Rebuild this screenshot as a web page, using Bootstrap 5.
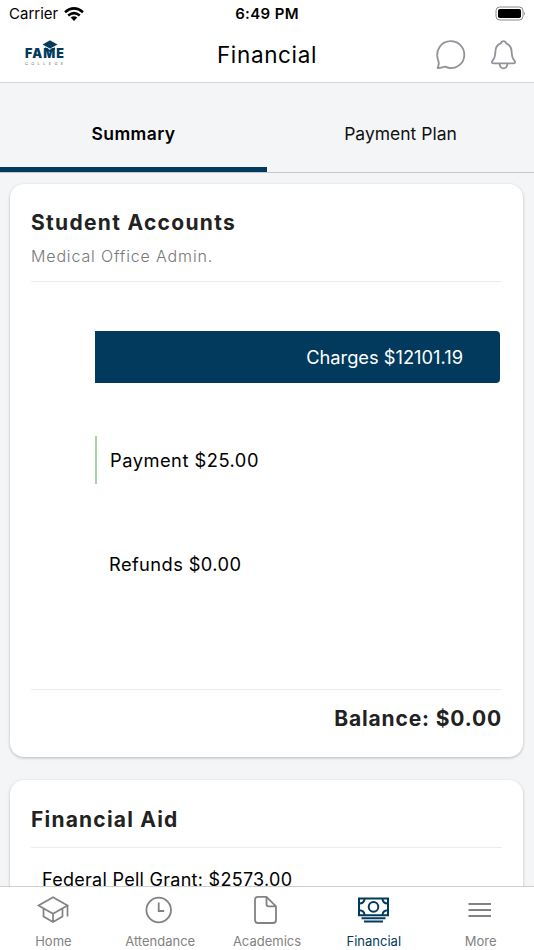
<!DOCTYPE html>
<html lang="en">
<head>
<meta charset="utf-8">
<meta name="viewport" content="width=device-width, initial-scale=1">
<title>Financial</title>
<link href="https://cdn.jsdelivr.net/npm/bootstrap@5.3.0/dist/css/bootstrap.min.css" rel="stylesheet">
<style>
:root{--navy:#023a5d;--page:#f4f5f7;--muted:#828282}
body{font-family:Inter,"Liberation Sans",sans-serif;background:var(--page);color:#000;line-height:1.2}
.status-bar{height:28px;font-size:15px;padding:0 9px}
.status-bar > div{flex:1 1 0}
.status-bar .wifi{margin-left:5px}
.clock-text{font-weight:600;letter-spacing:.35px}
.top-bar{height:55px;border-bottom:1px solid #d5d6d9;padding:0 17px 1px}
.top-bar > div{flex:1 1 0}
.page-title{font-size:22.5px;font-weight:400;letter-spacing:.65px}
.brand{width:42px;color:var(--navy);margin-left:8px;padding-top:4px}
.brand-name{font-size:12.5px;font-weight:900;letter-spacing:1.1px;line-height:12px}
.brand-sub{font-size:4px;letter-spacing:3.3px;color:#666;line-height:5px;margin-top:1px}
.brand-cap{top:-4px;left:16px}
.tab-strip{height:90px;border-bottom:1px solid #c6c7ca}
.tab-strip .nav-link{font-size:17.5px;color:#111;border-radius:0;padding:16px 0 0;border-bottom:5px solid transparent}
.tab-strip .nav-link.active{background:none;color:#000;font-weight:600;letter-spacing:.4px;border-bottom-color:var(--navy)}
main{padding:11px 11px 0 10px}
.panel{border:0;border-radius:14px;box-shadow:0 1px 3px rgba(0,0,0,.25);padding:0 21px}
.panel-accounts{height:573px}
.panel-title{font-size:21px;font-weight:700;color:#222;letter-spacing:1.3px;line-height:26px}
.accounts-title{padding-top:26px}
.panel-sub{font-size:16px;font-weight:300;color:#777;letter-spacing:.85px;line-height:20px;padding-top:10px;margin-bottom:15px}
.rule{height:1px;background:#ececee}
.chart{padding:49px 2px 0 64px}
.chart-row{height:103px}
.bar{height:52px}
.bar-charge{background:var(--navy);border-radius:0 4px 4px 0;color:#fff;padding-right:37px}
.bar-pay{height:48px;border-left:2px solid #a3d5a8;padding-left:13px;margin-top:2px}
.bar-refund{height:50px;padding-left:14px}
.bar-label{font-size:18.3px;letter-spacing:0;padding-top:1px}
.bar-pay .bar-label{letter-spacing:.5px}
.bar-refund .bar-label{letter-spacing:.4px}
.balance{padding:16px 0 25px;letter-spacing:.85px}
.panel-aid{margin-top:23px;height:300px}
.aid-title{padding:27px 0 14px;letter-spacing:1.2px}
.aid-line{font-size:18px;letter-spacing:.28px;padding:21px 0 0 11px}
.bottom-bar{height:64px;border-top:1px solid #cfcfd1;color:var(--muted)}
.bottom-bar a{color:inherit;font-size:13px;padding-top:7px;width:20%}
.bottom-bar a svg{height:32px;width:34px;margin-bottom:8px}
.bottom-bar a.current{color:var(--navy)}
</style>
<script src="https://cdn.jsdelivr.net/npm/bootstrap@5.3.0/dist/js/bootstrap.bundle.min.js"></script>
</head>
<body class="vh-100 d-flex flex-column overflow-hidden">
<header class="bg-white flex-shrink-0">
  <div class="status-bar d-flex align-items-center">
    <div class="d-flex align-items-center"><span>Carrier</span>
      <svg class="wifi" width="22" height="15" viewBox="0 0 22 15" fill="none" stroke="#000" stroke-width="2.5"><path d="M2 5.2Q11-2.4 20 5.2M5.2 8.5Q11 3.8 16.8 8.5"/><path d="M7.7 10.4Q11 8 14.3 10.4L11 13.9Z" fill="#000" stroke="none"/></svg>
    </div>
    <span class="clock-text">6:49 PM</span>
    <div class="d-flex justify-content-end">
      <svg width="30" height="16" viewBox="0 0 30 16"><rect x="1" y="1" width="27" height="13" rx="3.7" fill="none" stroke="#888" stroke-width="1"/><rect x="3" y="3" width="23" height="9" rx="1.8"/><path d="M29 5.500v4q1.600-2 0-4" fill="#888"/></svg>
    </div>
  </div>
  <div class="top-bar d-flex align-items-center">
    <div><div class="brand position-relative">
      <div class="brand-name">FAME</div><div class="brand-sub">COLLEGE</div>
      <svg class="brand-cap position-absolute" width="18" height="14" viewBox="0 0 18 14"><path d="M9 0 17 4.500 9 9 1 4.500Z" fill="#023a5d" stroke="#fff" stroke-width=".6"/><path d="M4 7.200v2.300l5 2.500 5-2.500V7.200L9 10Z" fill="#023a5d"/></svg>
    </div></div>
    <h1 class="page-title m-0">Financial</h1>
    <div class="d-flex justify-content-end align-items-center pt-1">
      <svg class="me-4 mb-1" width="30" height="30" viewBox="0 0 30 30" fill="none" stroke="#92929b" stroke-width="1.800" stroke-linejoin="round"><path d="M2.300 20.800C-1.500 10.500 5.100 1.200 14.700 1.200c7.600 0 13.600 6 13.600 13.500 0 9.800-10 16.200-19.200 11.900C6.700 26.800 4.300 28.400 1.600 28c1-2.200 1.800-4.700.7-7.200Z"/></svg>
      <svg class="mb-1" width="27" height="30" viewBox="0 0 27 30" fill="none" stroke="#92929b" stroke-width="1.800" stroke-linejoin="round"><path d="M13.500 1.200c-1.400 0-2.300.9-2.700 2.200C7.300 4.700 5.500 7.700 5.400 11.500c-.1 4.500-.7 6.700-2.800 9.200-1.200 1.500-.9 2.700.8 2.700h20.200c1.700 0 2-1.200.8-2.700-2.100-2.500-2.700-4.700-2.800-9.200-.1-3.800-1.900-6.800-5.400-8.100-.4-1.300-1.300-2.200-2.700-2.200ZM9.500 23.500c.3 3 1.800 4.900 4 4.900s3.700-1.900 4-4.900"/></svg>
    </div>
  </div>
</header>
<nav class="tab-strip nav nav-pills nav-justified flex-shrink-0 align-items-stretch">
  <a class="nav-link active d-flex align-items-center justify-content-center" href="#">Summary</a>
  <a class="nav-link d-flex align-items-center justify-content-center" href="#">Payment Plan</a>
</nav>
<main class="flex-fill overflow-hidden">
  <section class="panel panel-accounts card">
    <h2 class="panel-title accounts-title mb-0">Student Accounts</h2>
    <div class="panel-sub">Medical Office Admin.</div>
    <div class="rule"></div>
    <div class="chart flex-fill">
      <div class="chart-row"><div class="bar bar-charge d-flex align-items-center justify-content-end"><span class="bar-label">Charges $12101.19</span></div></div>
      <div class="chart-row"><div class="bar bar-pay d-flex align-items-center"><span class="bar-label">Payment $25.00</span></div></div>
      <div class="chart-row"><div class="bar bar-refund d-flex align-items-center"><span class="bar-label">Refunds $0.00</span></div></div>
    </div>
    <div class="rule"></div>
    <div class="balance panel-title text-end">Balance: $0.00</div>
  </section>
  <section class="panel panel-aid card">
    <h2 class="panel-title aid-title mb-0">Financial Aid</h2>
    <div class="rule"></div>
    <div class="aid-line">Federal Pell Grant: $2573.00</div>
  </section>
</main>
<nav class="bottom-bar bg-white d-flex flex-shrink-0">
  <a class="d-flex flex-column align-items-center text-decoration-none" href="#">
    <svg viewBox="0 0 34 32" fill="none" stroke="currentColor" stroke-width="1.700"><path d="M2.500 11.500 17 3.200l14.500 8.300L17 19.800ZM7.500 14.500v8L17 28l9.500-5.500v-8M17 19.800V28M31.500 11.500v11"/></svg>Home</a>
  <a class="d-flex flex-column align-items-center text-decoration-none" href="#">
    <svg viewBox="0 0 34 32" fill="none" stroke="currentColor" stroke-width="1.800"><circle cx="15.700" cy="16" r="12.300"/><path d="M15.700 8.500V17h5.500"/></svg>Attendance</a>
  <a class="d-flex flex-column align-items-center text-decoration-none" href="#">
    <svg viewBox="0 0 34 32" fill="none" stroke="currentColor" stroke-width="1.800" stroke-linejoin="round"><path d="M8 2.800h8.500L26 12.300V26q0 3-3 3H8q-3 0-3-3V5.800q0-3 3-3ZM16.500 2.800v7.500q0 2 2 2H26"/></svg>Academics</a>
  <a class="current d-flex flex-column align-items-center text-decoration-none" href="#">
    <svg viewBox="0 0 34 32" fill="none" stroke="currentColor" stroke-width="2"><path d="M2 4.500h29v16.700H2ZM4.500 24.200h24M7 27.500h19"/><circle cx="16.500" cy="12.900" r="4.800"/><path d="M2 9.500q5.500 0 5.500-5M31 9.500q-5.500 0-5.500-5M2 16.200q5.500 0 5.500 5M31 16.200q-5.500 0-5.500 5"/></svg>Financial</a>
  <a class="d-flex flex-column align-items-center text-decoration-none" href="#">
    <svg viewBox="0 0 34 32" fill="none" stroke="currentColor" stroke-width="2"><path d="M4.500 10H27M4.500 16H27M4.500 22H27"/></svg>More</a>
</nav>
</body>
</html>
